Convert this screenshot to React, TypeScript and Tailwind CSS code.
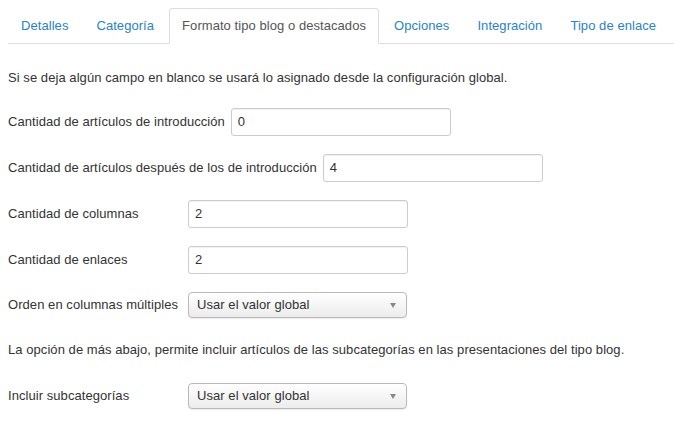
import React from 'react';

const tabs = [
  { id: 'detalles', label: 'Detalles' },
  { id: 'categoria', label: 'Categoría' },
  { id: 'formato', label: 'Formato tipo blog o destacados' },
  { id: 'opciones', label: 'Opciones' },
  { id: 'integracion', label: 'Integración' },
  { id: 'enlace', label: 'Tipo de enlace' },
];

const fields = [
  { label: 'Cantidad de artículos de introducción', value: '0' },
  { label: 'Cantidad de artículos después de los de introducción', value: '4' },
  { label: 'Cantidad de columnas', value: '2' },
  { label: 'Cantidad de enlaces', value: '2' },
];

const Label = ({ children }: { children: React.ReactNode }) => (
  <label className="min-w-[180px] pr-[6px] shrink-0 leading-[18px]">{children}</label>
);

const Select = ({ value }: { value: string }) => (
  <div className="relative w-[219px] h-[26px] rounded-[4px] border border-[#b9b9b9] bg-gradient-to-b from-white to-[#ececec] shadow-[0_1px_1px_rgba(0,0,0,0.08)] flex items-center pl-[8px] text-[#333]">
    <span>{value}</span>
    <span className="absolute right-[10px] top-[10px] w-0 h-0 border-l-[3.5px] border-r-[3.5px] border-t-[5px] border-l-transparent border-r-transparent border-t-[#888]" />
  </div>
);

const App: React.FC = () => {
  const active = 'formato';

  return (
    <div
      className="w-[674px] h-[426px] bg-white text-[13px] tracking-[0.06px] text-[#333] overflow-hidden pl-2 pt-2"
      style={{ fontFamily: '"Liberation Sans", Arial, sans-serif' }}
    >
      {/* Tabs */}
      <ul className="flex border-b border-[#dddddd] whitespace-nowrap">
        {tabs.map((tab) => (
          <li key={tab.id} className="mr-[2px] -mb-px shrink-0">
            <a
              className={
                tab.id === active
                  ? 'block px-3 py-2 leading-[18px] border border-[#dddddd] border-b-white rounded-t-[4px] bg-white text-[#555]'
                  : 'block px-3 py-2 leading-[18px] border border-transparent text-[#2a83c4]'
              }
            >
              {tab.label}
            </a>
          </li>
        ))}
      </ul>

      <p className="mt-[25px] mb-[21px] leading-[18px]">
        Si se deja algún campo en blanco se usará lo asignado desde la configuración global.
      </p>

      {fields.map((f) => (
        <div key={f.label} className="flex items-center mb-[18px]">
          <Label>{f.label}</Label>
          <div className="w-[220px] h-[28px] border border-[#cccccc] rounded-[3px] px-[6px] flex items-center shadow-[inset_0_1px_1px_rgba(0,0,0,0.06)]">
            {f.value}
          </div>
        </div>
      ))}

      <div className="flex items-center">
        <Label>Orden en columnas múltiples</Label>
        <Select value="Usar el valor global" />
      </div>

      <p className="mt-[23px] mb-[24px] leading-[18px]">
        La opción de más abajo, permite incluir artículos de las subcategorías en las presentaciones del tipo blog.
      </p>

      <div className="flex items-center">
        <Label>Incluir subcategorías</Label>
        <Select value="Usar el valor global" />
      </div>
    </div>
  );
};

export default App;
